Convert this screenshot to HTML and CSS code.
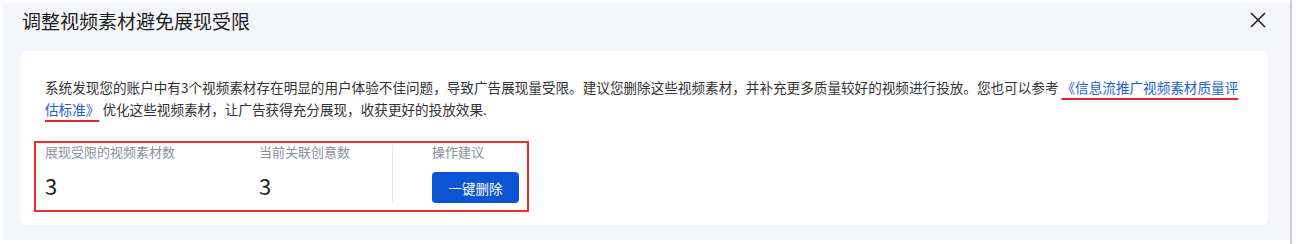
FILE: index.html
```html
<!DOCTYPE html>
<html lang="zh-CN">
<head>
    <meta charset="UTF-8">
    <meta name="viewport" content="width=device-width, initial-scale=1.0">
    <title>调整视频素材避免展现受限</title>
    <link rel="stylesheet" href="styles.css">
</head>
<body>
    <div class="page">
        <div class="modal">
            <div class="modal-header">
                <h2 class="modal-title">调整视频素材避免展现受限</h2>
                <button class="close-btn" aria-label="关闭">
                    <svg width="16" height="16" viewBox="0 0 16 16">
                        <path d="M1 1 L15 15 M15 1 L1 15" stroke="#222" stroke-width="1.6" fill="none"/>
                    </svg>
                </button>
            </div>

            <div class="card">
                <p class="desc">系统发现您的账户中有3个视频素材存在明显的用户体验不佳问题，导致广告展现量受限。建议您删除这些视频素材，并补充更多质量较好的视频进行投放。您也可以参考 <a class="doc-link" href="#">《信息流推广视频素材质量评估标准》</a> 优化这些视频素材，让广告获得充分展现，收获更好的投放效果.</p>

                <div class="stats">
                    <div class="stat stat-first">
                        <div class="stat-label">展现受限的视频素材数</div>
                        <div class="stat-value">3</div>
                    </div>
                    <div class="stat stat-second">
                        <div class="stat-label">当前关联创意数</div>
                        <div class="stat-value">3</div>
                    </div>
                    <div class="divider"></div>
                    <div class="stat stat-action">
                        <div class="stat-label">操作建议</div>
                        <button class="delete-btn">一键删除</button>
                    </div>
                </div>
            </div>
        </div>
        <div class="edge"></div>
    </div>
</body>
</html>
```

FILE: styles.css
```css
body {
    margin: 0;
    background: #fff;
    font-family: "Noto Sans CJK SC", "Noto Sans", sans-serif;
}
.page {
    display: flex;
    height: 244px;
}
.modal {
    width: 1288px;
    margin: 2px 0 4px 2px;
    background: #f5f6fa;
}
.edge {
    width: 2px;
    background: #cdcdcd;
}
.modal-header {
    height: 36px;
    display: flex;
    align-items: center;
    justify-content: space-between;
    padding: 0 24px 0 20px;
}
.modal-title {
    margin: 0;
    font-size: 19px;
    font-weight: normal;
    color: #1d1d1d;
}
.close-btn {
    border: none;
    background: none;
    padding: 0;
    width: 16px;
    height: 16px;
    cursor: pointer;
}
.close-btn svg {
    display: block;
}
.card {
    margin: 13px 22px 0 19px;
    height: 174px;
    box-sizing: border-box;
    padding: 25px 13px 13px 13px;
    background: #fff;
    border-radius: 6px;
}
.desc {
    margin: 0;
    padding: 0 13px 0 11px;
    font-size: 13.6px;
    line-height: 22px;
    color: #333;
}
.doc-link {
    color: #2460d4;
    text-decoration: underline;
    text-decoration-color: #e8222a;
    text-decoration-thickness: 2px;
    text-underline-offset: 5px;
}
.stats {
    margin-top: 21px;
    width: 495px;
    height: 71px;
    box-sizing: border-box;
    border: 2px solid #f22b2b;
    padding: 0 8px 0 9px;
    display: flex;
}
.stat-label {
    font-size: 13px;
    line-height: 18px;
    color: #8a8f99;
}
.stat-value {
    margin-top: 9px;
    font-size: 22px;
    line-height: 30px;
    color: #222;
}
.stat-first {
    width: 214px;
}
.stat-second {
    width: 133px;
}
.divider {
    width: 1px;
    margin: 2px 0 8px;
    background: #e6e8ee;
}
.stat-action {
    padding-left: 39px;
}
.delete-btn {
    margin-top: 11px;
    width: 87px;
    height: 31px;
    border: none;
    border-radius: 4px;
    background: #0b55d4;
    color: #fff;
    font-family: inherit;
    font-size: 13.5px;
    cursor: pointer;
}
```
